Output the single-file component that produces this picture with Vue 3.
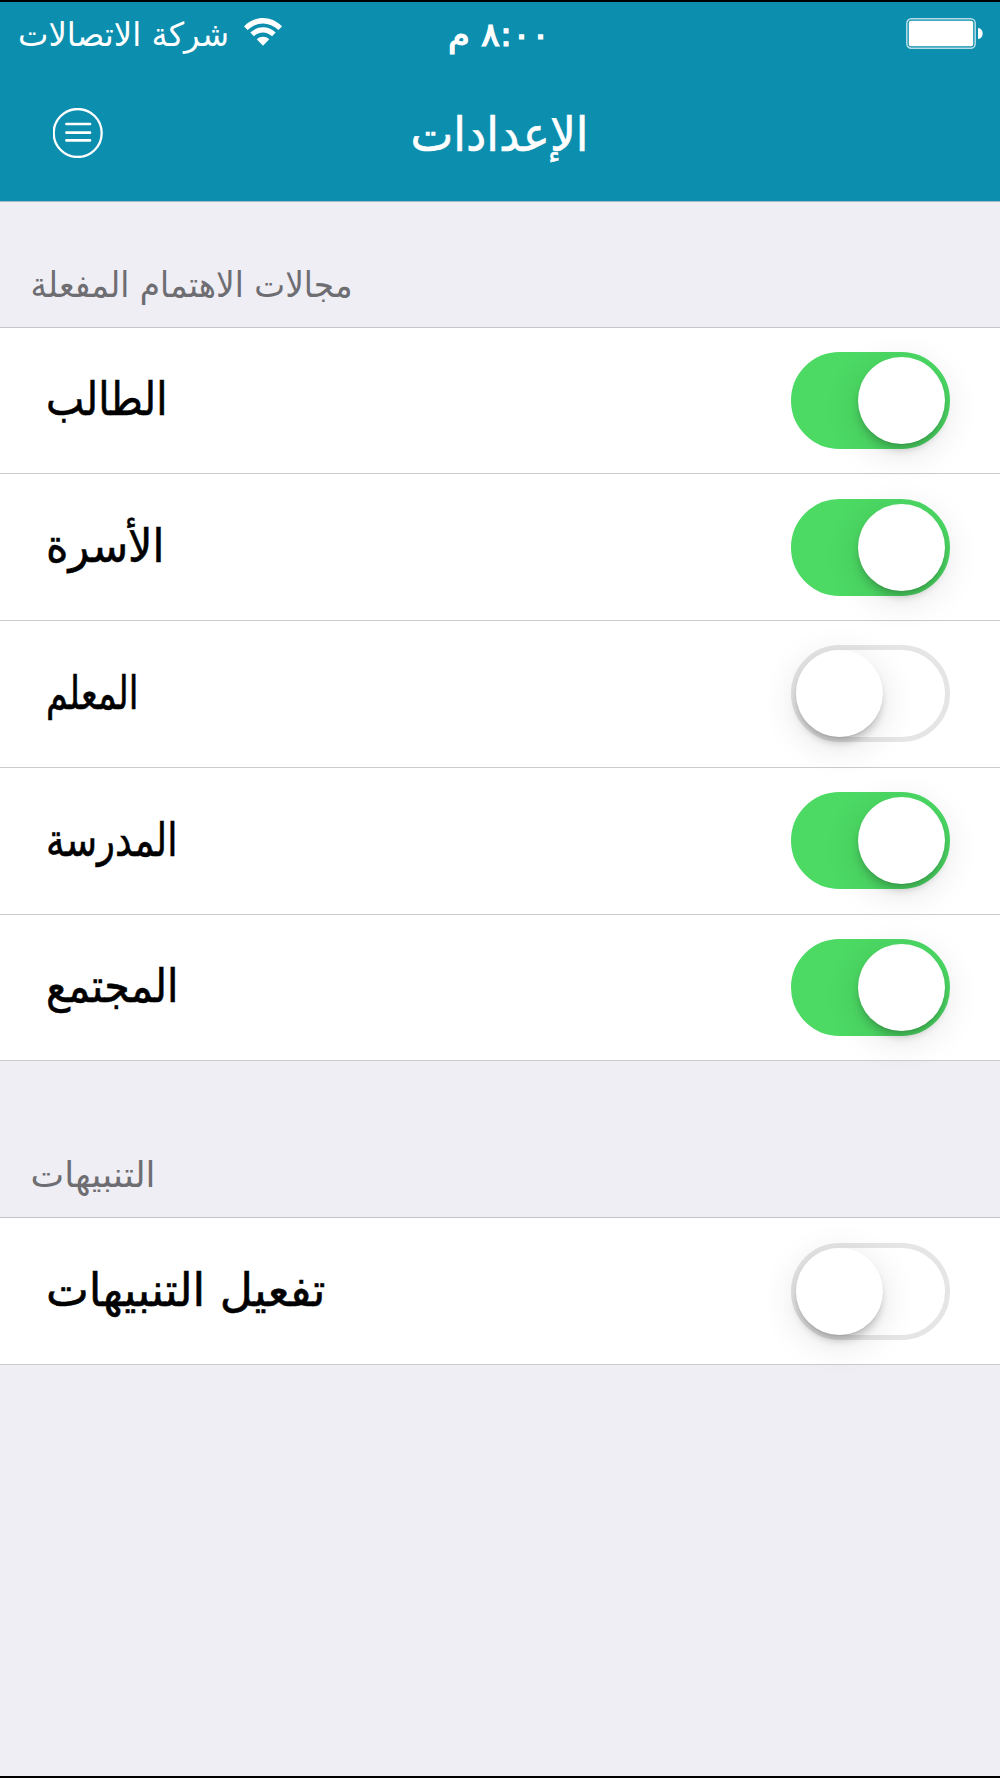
<template>
  <div class="screen">
    <header class="header">
      <div class="status-bar">
        <div class="carrier">
          <svg class="label" width="209" height="60">
            <text x="-1" y="44" font-size="33" textLength="211" lengthAdjust="spacingAndGlyphs">شركة الاتصالات</text>
          </svg>
          <svg class="wifi" width="38" height="28" viewBox="0 0 38 28">
            <path d="M0 8.4C10.8-2.7 27.2-2.7 38 8.4L34.4 12C25.5 3.2 12.5 3.2 3.6 12Z" />
            <path d="M6.3 14.6C13.6 7.5 24.4 7.5 31.7 14.6L28.1 18.2C22.8 13.1 15.2 13.1 9.9 18.2Z" />
            <path d="M12.7 21.2C16.3 17.9 21.7 17.9 25.3 21.2L19 27.7Z" />
          </svg>
        </div>
        <svg class="label time" width="95" height="60">
          <text x="-5" y="44" font-size="33" textLength="102" lengthAdjust="spacingAndGlyphs">٨:٠٠ م</text>
        </svg>
        <div class="battery-wrap">
          <svg width="77" height="31" viewBox="0 0 77 31">
            <rect x="0.8" y="0.8" width="68.4" height="29.4" rx="4.5" fill="none" stroke="#fff" stroke-opacity="0.7" stroke-width="1.5" />
            <rect x="2.8" y="2.8" width="64.4" height="25.4" rx="2" />
            <path d="M72 10C78.2 10.5 78.2 20.5 72 21Z" />
          </svg>
        </div>
      </div>
      <div class="nav-bar">
        <button class="menu" aria-label="القائمة">
          <svg width="50" height="50" viewBox="0 0 50 50">
            <circle cx="24.7" cy="25" r="24" fill="none" stroke="#fff" stroke-width="2.3" />
            <path d="M13.5 16H37M13.5 24.7H37M13.5 32.4H37" fill="none" stroke="#fff" stroke-width="2.7" stroke-linecap="round" />
          </svg>
        </button>
        <svg class="label title" width="174" height="80">
          <text x="-2.5" y="48" font-size="47" textLength="178" lengthAdjust="spacingAndGlyphs">الإعدادات</text>
        </svg>
      </div>
    </header>

    <section v-for="section in sections" :key="section.title">
      <div class="section-head" :style="{ height: section.headHeight + 'px' }">
        <svg class="label" :width="section.width" height="60">
          <text x="-0.5" y="29.5" font-size="35" :textLength="section.width + 1" lengthAdjust="spacingAndGlyphs">{{ section.title }}</text>
        </svg>
      </div>
      <div class="rows">
        <div v-for="item in section.items" :key="item.name" class="row">
          <svg class="label row-label" :width="item.width" height="80">
            <text x="-1" y="54.5" font-size="46" :textLength="item.width + 2.5" lengthAdjust="spacingAndGlyphs">{{ item.name }}</text>
          </svg>
          <button
            :class="['switch', { on: item.enabled }]"
            role="switch"
            :aria-checked="item.enabled"
            @click="item.enabled = !item.enabled"
          >
            <span class="knob"></span>
          </button>
        </div>
      </div>
    </section>
  </div>
</template>

<script setup>
import { reactive } from "vue";

// width: rendered label width in px
const sections = reactive([
  {
    title: "مجالات الاهتمام المفعلة",
    width: 321,
    headHeight: 124.5,
    items: [
      { name: "الطالب", width: 119, enabled: true },
      { name: "الأسرة", width: 116, enabled: true },
      { name: "المعلم", width: 90, enabled: false },
      { name: "المدرسة", width: 129, enabled: true },
      { name: "المجتمع", width: 130, enabled: true },
    ],
  },
  {
    title: "التنبيهات",
    width: 124,
    headHeight: 156,
    items: [{ name: "تفعيل التنبيهات", width: 277, enabled: false }],
  },
]);
</script>

<style>
body {
  margin: 0;
  background: #efeef4;
}
</style>

<style scoped>
.screen {
  box-sizing: border-box;
  width: 1000px;
  height: 1778px;
  border-top: 2px solid #000;
  border-bottom: 2px solid #000;
  background: #efeef4;
  overflow: hidden;
  font-family: "DejaVu Sans", sans-serif;
}

.header {
  box-sizing: border-box;
  height: 200px;
  background: #0c8eae;
  border-bottom: 1px solid #a5b9c6;
  color: #fff;
}

.header svg {
  fill: #fff;
}

.label {
  display: block;
  overflow: visible;
  fill: currentColor;
}

.time,
.title,
.row-label {
  stroke: currentColor;
  stroke-width: 0.6px;
}

.time {
  stroke-width: 1.2px;
}

.status-bar {
  display: grid;
  grid-template-columns: 1fr auto 1fr;
  height: 60px;
  padding: 0 18px 0 19px;
}

.carrier {
  display: flex;
  gap: 16px;
}

.wifi {
  margin-top: 16px;
}

.battery-wrap {
  display: flex;
  justify-content: flex-end;
  padding-top: 16px;
}

.battery-wrap svg {
  margin-right: -1px;
}

.nav-bar {
  display: grid;
  grid-template-columns: 1fr auto 1fr;
  padding: 46px 53px 0;
}

.menu {
  width: 50px;
  height: 50px;
  padding: 0;
  border: 0;
  background: none;
}

.menu svg {
  display: block;
}

.title {
  margin-top: -5px;
}

.section-head {
  box-sizing: border-box;
  display: flex;
  align-items: flex-end;
  padding: 0 31px;
  color: #6d6d72;
}

.rows {
  border-top: 1px solid #c4c3c7;
  background: #fff;
}

.row {
  box-sizing: border-box;
  display: flex;
  align-items: center;
  justify-content: space-between;
  height: 146.75px;
  padding: 0 50px 0 47px;
  border-bottom: 1px solid #cbcace;
}

.switch {
  box-sizing: border-box;
  width: 159px;
  height: 97px;
  padding: 0;
  border: 5px solid #e5e5e5;
  border-radius: 49px;
  background: #fff;
}

.knob {
  display: block;
  width: 87px;
  height: 87px;
  border-radius: 50%;
  background: #fff;
  box-shadow: 0 7px 9px -2px rgba(0, 0, 0, 0.22), 0 8px 36px rgba(0, 0, 0, 0.12), 0 1px 1px rgba(0, 0, 0, 0.06);
}

.switch.on {
  border-color: #4cd964;
  background: #4cd964;
}

.switch.on .knob {
  margin-left: 62px;
}
</style>
